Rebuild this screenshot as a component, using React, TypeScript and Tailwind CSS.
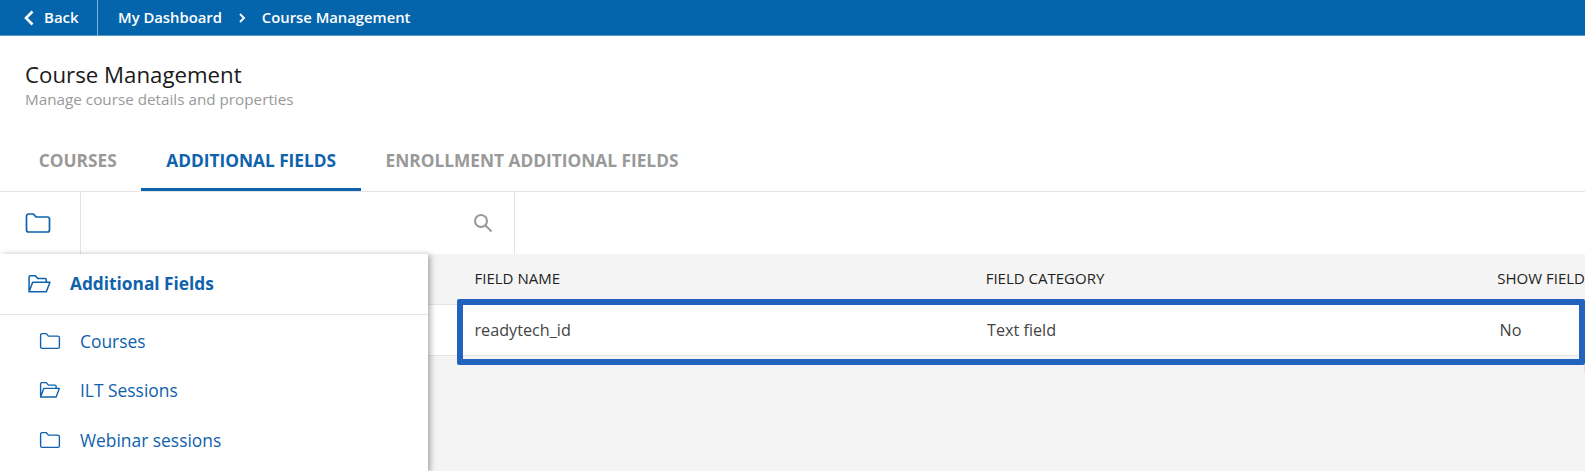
const font = { fontFamily: '"Open Sans", sans-serif' };

function FolderIcon({ open, className }: { open?: boolean; className: string }) {
  return (
    <svg viewBox="0 0 26 22" fill="none" stroke="currentColor" strokeWidth="1.7" strokeLinejoin="round" className={className}>
      {open ? (
        <path d="M1.5 19V3.5a1.5 1.5 0 0 1 1.5-1.5h5.5l2.5 3h8a1.5 1.5 0 0 1 1.5 1.5V9M1.5 19.5l4-10.5h19l-4 10.5z" />
      ) : (
        <path d="M1.5 4a2 2 0 0 1 2-2h5l2.5 3h11.5a2 2 0 0 1 2 2v11a2 2 0 0 1-2 2h-19a2 2 0 0 1-2-2z" />
      )}
    </svg>
  );
}

const items = [
  { label: 'Courses', open: false },
  { label: 'ILT Sessions', open: true },
  { label: 'Webinar sessions', open: false },
];

export default function App() {
  return (
    <div className="w-[1585px] h-[471px] overflow-hidden bg-white flex flex-col" style={font}>
      {/* Top bar */}
      <div className="h-9 shrink-0 bg-[#0565ac] border-b border-[#5a96c8] flex items-center text-white text-[14.8px] font-semibold">
        <div className="w-[98px] h-[36px] border-r border-[#7fb0d5] flex items-center pl-6 gap-[10px]">
          <svg viewBox="0 0 10 16" className="w-2.5 h-4" fill="none" stroke="currentColor" strokeWidth="2.6">
            <path d="M8.5 1.5 2 8l6.5 6.5" />
          </svg>
          <span className="text-[15px]">Back</span>
        </div>
        <span className="ml-[20px]">My Dashboard</span>
        <svg viewBox="0 0 8 12" className="w-2 h-3 ml-[16px] mr-[16px]" fill="none" stroke="currentColor" strokeWidth="1.8">
          <path d="m2 2 4 4-4 4" />
        </svg>
        <span>Course Management</span>
      </div>

      {/* Title */}
      <div className="pl-[25px] pt-[25px] h-[95px] shrink-0">
        <h1 className="text-[22.25px] leading-[28px] text-[#1a1a1a]">Course Management</h1>
        <p className="text-[15.25px] leading-[20px] text-[#999999]">Manage course details and properties</p>
      </div>

      {/* Tabs */}
      <div className="h-[61px] shrink-0 border-b border-[#e4e4e4] flex items-end pl-[14px] text-[17.3px] font-bold">
        <div className="h-[61px] px-[24.75px] pt-[17.5px] text-[#999999]">COURSES</div>
        <div className="h-[61px] px-[24.75px] pt-[17.5px] text-[#0f62ac] border-b-[3px] border-[#0f62ac]">ADDITIONAL FIELDS</div>
        <div className="h-[61px] px-[24.75px] pt-[17.5px] text-[#999999]">ENROLLMENT ADDITIONAL FIELDS</div>
      </div>

      {/* Toolbar */}
      <div className="h-[62px] shrink-0 flex">
        <div className="w-[81px] border-r border-[#e4e4e4] flex items-center justify-center text-[#0f62ac]">
          <FolderIcon className="w-[26px] h-[22px] mr-[4px]" />
        </div>
        <div className="w-[434px] border-r border-[#e4e4e4] flex items-center justify-end pr-[21px] text-[#999999]">
          <svg viewBox="0 0 20 20" className="w-5 h-5" fill="none" stroke="currentColor" strokeWidth="2">
            <circle cx="8" cy="8" r="6" />
            <path d="m12.5 12.5 6 6" />
          </svg>
        </div>
      </div>

      {/* Content */}
      <div className="relative flex-1 bg-[#f4f4f4]">
        <div className="h-[51px] pl-[474.5px] pb-[2px] flex items-center text-[15px] font-medium text-[#222222] border-b border-[#e4e4e4]">
          <div className="w-[512.5px]">FIELD NAME</div>
          <div className="w-[513px]">FIELD CATEGORY</div>
          <div className="whitespace-nowrap">SHOW FIELD</div>
        </div>
        <div className="h-[51px] pl-[474.5px] bg-white border-b border-[#e4e4e4] flex items-center text-[16.2px] text-[#444444]">
          <div className="w-[512.5px]">readytech_id</div>
          <div className="w-[512.5px]">Text field</div>
          <div>No</div>
        </div>

        {/* Highlight drawn over the row */}
        <div className="absolute left-[457px] right-0 top-[45px] h-[66px] border-[6px] border-[#2163bd] rounded-[2px]" />
        <div className="absolute right-0 top-[111px] w-px h-2 bg-[#fbd5d0]" />

        {/* Folder panel */}
        <div className="absolute left-0 top-0 bottom-0 w-[428px] bg-white shadow-[2px_1px_6px_rgba(0,0,0,0.35)]">
          <div className="h-[61px] border-b border-[#e4e4e4] flex items-center pl-[27px] gap-[18px] text-[#0f62ac]">
            <FolderIcon open className="w-[25px] h-[20px]" />
            <span className="text-[17.3px] font-bold">Additional Fields</span>
          </div>
          <div className="pt-[1px]">
            {items.map((item) => (
              <div key={item.label} className="h-[49.5px] flex items-center pl-[39px] gap-[19px] text-[#0f62ac] text-[17.4px]">
                <FolderIcon open={item.open} className="w-[22px] h-[18px]" />
                <span>{item.label}</span>
              </div>
            ))}
          </div>
        </div>
      </div>
    </div>
  );
}
